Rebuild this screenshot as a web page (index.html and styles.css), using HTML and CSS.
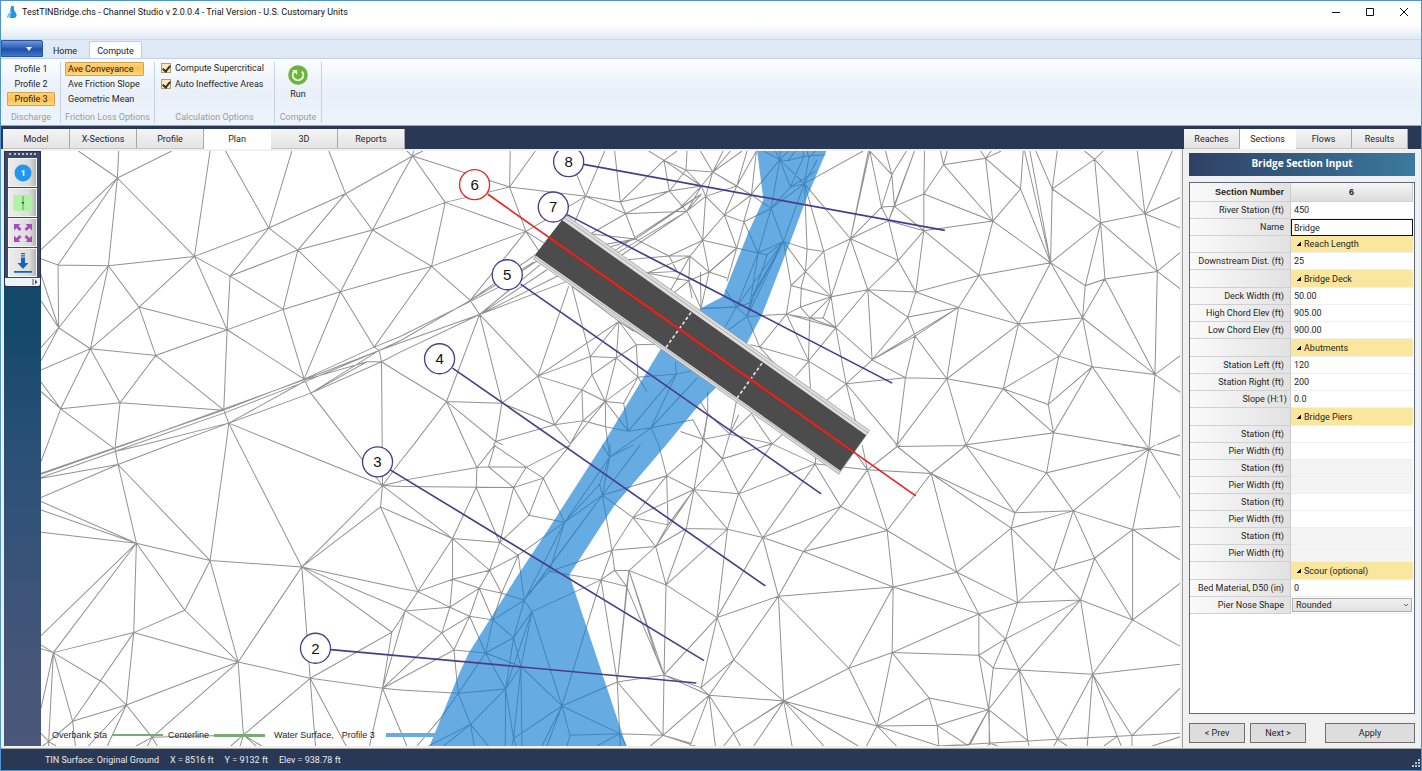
FILE: index.html
```html
<!DOCTYPE html>
<html lang="en">
<head>
<meta charset="utf-8">
<title>TestTINBridge.chs - Channel Studio</title>
<link rel="stylesheet" href="styles.css">
</head>
<body>
<div class="window">
  <header class="titlebar">
    <svg class="app-icon" viewBox="0 0 12 14"><path d="M5 1.500C7 0 8.500 1 8 3.500 7.500 6 10 7 10.500 9c.5 2-.5 3.500-2 4H2C.5 11.500 2 9.500 3.500 8 5 6.500 4 4 5 1.500Z" fill="#2196e8"/><path d="M5 6c1.500 2-2 3.500-.5 7H2C.5 11 4.500 9 5 6Z" fill="#9adcff"/></svg>
    <span class="title">TestTINBridge.chs - Channel Studio v 2.0.0.4 - Trial Version - U.S. Customary Units</span>
    <div class="caption-buttons">
      <button aria-label="Minimize"><svg viewBox="0 0 10 10"><path d="M1 5.500h8"/></svg></button>
      <button aria-label="Maximize"><svg viewBox="0 0 10 10"><path d="M1.500 1.500h7v7h-7z"/></svg></button>
      <button aria-label="Close"><svg viewBox="0 0 10 10"><path d="M1 1l8 8M9 1l-8 8"/></svg></button>
    </div>
  </header>
  <div class="quickbar"></div>
  <nav class="ribbon-tabs">
    <button class="app-menu" aria-label="Application menu"><svg viewBox="0 0 6 4"><path d="M0 0h6L3 4z" fill="#fff"/></svg></button>
    <button class="ribbon-tab">Home</button>
    <button class="ribbon-tab active">Compute</button>
  </nav>
  <section class="ribbon">
    <div class="group discharge">
      <div class="options"><button>Profile 1</button><button>Profile 2</button><button class="on">Profile 3</button></div>
      <div class="group-name">Discharge</div>
    </div>
    <div class="group friction">
      <div class="options"><button class="on">Ave Conveyance</button><button>Ave Friction Slope</button><button>Geometric Mean</button></div>
      <div class="group-name">Friction Loss Options</div>
    </div>
    <div class="group calc">
      <div class="checks">
        <label><input type="checkbox" checked>Compute Supercritical</label>
        <label><input type="checkbox" checked>Auto Ineffective Areas</label>
      </div>
      <div class="group-name">Calculation Options</div>
    </div>
    <div class="group run">
      <button class="run-button"><svg viewBox="0 0 20 20"><circle cx="10" cy="10" r="9.800" fill="#6cb33f"/><path d="M6.200 6.500A5.200 5.200 0 1 0 13.800 6.500" fill="none" stroke="#e6f5d8" stroke-width="2"/><path d="M4.200 5h5v5z" fill="#e6f5d8"/></svg>Run</button>
      <div class="group-name">Compute</div>
    </div>
  </section>
  <div class="view-tabs">
    <div class="tabs main-tabs"><button>Model</button><button>X-Sections</button><button>Profile</button><button class="active">Plan</button><button>3D</button><button>Reports</button></div>
    <div class="tabs side-tabs"><button>Reaches</button><button class="active">Sections</button><button>Flows</button><button>Results</button></div>
  </div>
  <main class="workspace">
    <aside class="toolstrip">
      <div class="toolbar">
        <div class="grip"></div>
        <button aria-label="Section labels"><svg viewBox="0 0 20 20"><circle cx="10" cy="10" r="8.500" fill="#2196f3"/><text x="10" y="13" class="tool-digit">1</text></svg></button>
        <button aria-label="Centerline"><svg viewBox="0 0 20 20"><path d="M.5 2h19v16H.5z" fill="#b2f2a8"/><path d="M10 3v14" stroke="#5c9c57"/><path d="M8.500 9h3L10 11.500z" fill="#1f6b20"/></svg></button>
        <button aria-label="Zoom extents"><svg viewBox="0 0 20 20"><g fill="#ab47bc"><path id="corner" d="M1 1h6.500L5.500 3 8.500 6 6.500 8 3.500 5 1 7.500z"/><use href="#corner" transform="matrix(-1 0 0 1 20 0)"/><use href="#corner" transform="matrix(1 0 0 -1 0 20)"/><use href="#corner" transform="rotate(180 10 10)"/></g></svg></button>
        <button aria-label="Download surface"><svg viewBox="0 0 20 20"><path d="M8 0h4v1.200H8zM8 2.300h4v1.200H8zM8 4.600h4V10h3.500L10 16 4.500 10H8zM1 18h18v1.700H1z" fill="#1565c0"/></svg></button>
        <div class="overflow"><svg viewBox="0 0 6 6"><path d="M1 0v6" stroke="#555"/><path d="M3 .5L5.500 3 3 5.500z" fill="#555"/></svg></div>
      </div>
    </aside>
    <div class="map">
      <svg class="plan" viewBox="123 19 3417 1784" preserveAspectRatio="xMinYMin slice">
        <g class="mesh">
          <path d="M235 19L352 100L356 19M352 100L515 19M352 100L123 315M352 100L174 361M352 100L325 363M352 100L583 335M123 342L174 361L325 363L583 335M174 361L176 549M325 363L176 549M325 363L417 487M325 363L271 612M176 549L123 390M176 549L123 468M176 549L123 608M176 549L123 648M176 549L271 612L123 676M271 612L417 487L583 335M271 612L467 632L417 487L681 555L467 632L360 774L271 612L182 792M467 632L671 796M182 792L123 712M182 792L123 740M182 792L360 774L671 796M182 792L142 900M182 792L328 900M360 774L346 900M583 335L630 19M583 335L806 250M583 335L690 394M583 335L681 555M676 19L806 250L875 19M806 250L1036 147M806 250L893 316M806 250L690 394L893 316M690 394L681 555M690 394L849 494L681 555L912 703M681 555L671 796M849 494L893 316M849 494L1021 441M849 494L912 703M893 316L1036 147M893 316L1117 256M893 316L1021 441M1036 147L986 19M1036 147L1200 55M1036 147L1117 256L1200 100M1117 256L1200 225M1117 256L1200 308M1117 256L1021 441L1200 390M1021 441L1122 607L1200 497M1021 441L912 703M370 900L671 796L912 703L1122 607L1200 575M375 900L912 705L1137 617L1200 588M400 900L671 805L912 712L1137 617L1200 594M430 900L686 835L912 710M510 900L686 835L932 745L1144 651L1200 622M671 796L686 835M912 703L932 745L1137 617M932 745L1100 651L1144 651L1137 617L1122 607M912 706L1100 651M1144 651L1146 900M1144 651L1200 686M932 745L1052 900M686 835L678 900M686 835L718 900M686 835L845 900"/>
          <path transform="translate(0 900)" d="M142 0L123 50M328 0L345 12L346 0M345 12L354 59M123 85L370 0M123 88L375 0M123 98L345 20L400 0M123 100L354 59M345 20L430 0M123 158L354 59L510 0M354 59L409 295M354 59L630 347M409 295L123 170M409 295L123 195M409 295L123 262M409 295L630 347M409 295L123 572M409 295L160 623M409 295L401 563M409 295L554 496L630 347L678 0M630 347L905 366M630 347L714 651M554 496L401 563M554 496L714 651M401 563L160 623M401 563L218 829M401 563L379 780M401 563L714 651M160 623L123 600M160 623L123 611M160 623L123 790M160 623L146 890M160 623L218 829M160 623L311 714L379 780L218 829L146 890M379 780L714 651M379 780L456 877M379 780L265 903M379 780L322 903M218 829L226 903M146 890L123 865M146 890L168 903M146 890L128 903M146 890V903M714 651L905 366M714 651L930 700M714 651L730 870M714 651L456 877L472 903M456 877L408 903M456 877L442 903M456 877L730 870L930 700M730 870L692 903M730 870L720 903M730 870L768 903M730 870L785 903M905 366L718 0M905 366L930 700M905 366L1147 122M905 366L1141 186M905 366L1200 430M905 366L1200 490M905 366L1175 562L930 700L1147 730L1175 562L1200 525M1147 730L1200 552M930 700L946 903M930 700L1038 903M1147 730L1108 903M1147 730L1220 903M1147 730L1200 735M1147 122L845 0M1147 122L1141 186M1147 122L1052 0M1147 122L1200 50M1147 122L1200 110M1147 122L1200 125M1147 122L1200 163M1147 122L1146 0M1141 186L1200 212M1141 186L1200 318"/>
          <path transform="translate(1200 0)" d="M0 55L37 34L0 100M37 34L20 19M37 34L40 19M37 34L68 19M37 34L328 127M37 34L135 173L0 225M135 173L94 365L0 308M135 173L328 127L377 260L135 173M94 365L0 390M94 365L0 497M94 365L377 260M94 365L210 467M328 127L330 19M328 127L405 19M328 127L556 155M377 260L210 467M377 260L430 340M377 260L556 155M377 260L470 320M210 467L420 320M556 155L613 19M556 155L500 19M556 155L660 172L643 19M556 155L490 310M660 172L676 207L556 155M660 172L807 139M676 207L570 268M676 207L859 200M676 207L705 283M676 207L807 139M660 172L791 47L745 19M791 47L830 19M791 47L857 76L860 19M791 47L807 139M791 47L903 124M857 76L937 82L900 19M857 76L807 139L903 124M857 76L903 124M937 82L968 19M937 82L1025 19M937 82L990 19M1040 19L1009 124L1053 151M937 82L903 124L916 155L937 82M937 82L1009 124L1068 19M1009 124L916 155L972 211L1053 151M937 82L1053 151L1068 19M903 124L832 197L705 283M903 124L859 200L807 139M903 148L832 197M903 148L859 200L916 155M903 148L705 283L610 300M903 148L640 320M859 200L650 325M859 200L665 330M859 200L907 287L972 211L1009 124M907 287L916 155M972 211L1030 231L1053 151M972 211L1009 310L907 287L806 334L705 283M907 287L926 382L1009 310M907 287L869 334L926 382L865 408L869 334L806 334L680 345M869 334L740 385M806 334L830 380L740 385M869 334L806 445M865 408L740 385M865 408L820 445M865 408L875 460M926 382L902 491M926 382L980 400M902 491L865 408M902 491L1008 487M705 283L620 310M705 283L575 268M620 298L705 283M0 575L290 430L415 345M0 588L210 467L400 352M0 594L238 509L440 375M0 622L238 509L480 390M238 509L420 360M238 509L500 410M210 467L238 509L139 770M238 509L305 775M238 509L413 694L656 530L515 425M139 770L0 686M139 770L305 775L286 890L139 770L40 900M139 770L198 900M305 775L413 694L463 840L305 775M413 694L505 425M413 694L570 635L515 425M413 694L545 735L463 840L510 897L548 828L463 840M463 840L286 890L280 900M286 890L308 900M570 635L656 530L648 639L570 635L575 690L648 639L615 770L575 690L545 735L615 770L548 828L545 735M656 530L708 600L648 639L713 697L708 600L790 598M656 530L700 560M656 530L745 585M713 697L615 770L684 859L828 688L713 697L740 740M615 770L616 846L548 828M615 770L670 775L713 697M615 770L510 897M684 859L616 846L628 937M684 859L670 775M684 859L752 849L828 688L825 650M752 849L890 700M752 849L775 900M752 849L628 937M752 849L878 825M828 688L910 670M922 806L922 740M922 806L900 770M922 806L908 883L878 825M908 883L840 860M908 883L905 900"/>
          <path transform="translate(2100 0)" d="M190 19L238 45L225 19M240 19L238 45L265 19M238 45L263 48L310 35L375 30M263 48L285 19M238 45L152 150M238 45L270 127L312 117L238 45L212 191L270 127L310 35L308 19M312 117L325 40L320 19M325 40L345 19M312 117L350 45M270 127L345 80M152 150L212 191L131 231M312 117L212 191L249 290L312 117L320 313L370 320L312 117L450 282M212 191L173 325L249 290L200 330L173 325L131 231L109 310L173 325M26 382L109 310L80 410M249 290L149 475L173 325L108 487M249 290L140 515L200 330M249 290L108 487M249 290L155 455M249 290L320 313M249 290L315 381L320 313M249 290L272 422L315 381L393 456L272 422L258 508L140 515L149 475L108 487L140 515L178 607L258 508L300 487L303 423M75 435L108 487L2 491M108 487L75 545M140 515L85 555M315 381L370 320M315 381L303 423M300 487L330 521L258 508L325 649L178 607L225 660M258 508L405 549M325 649L330 730M325 649L285 695M178 607L150 600M2 491L0 382M22 806L10 883L88 868L22 806M88 868L108 770M88 868L215 897L66 942L10 883M88 868L66 942L115 1047L215 897L155 810M115 810L88 868L160 800M215 897L245 870M215 897L345 957L345 935M115 1047L345 957L187 1179L115 1047"/>
          <path transform="translate(1200 900)" d="M0 50L40 0M198 0L230 68L284 0L265 66L378 67L280 0M230 68L0 108L0 112M230 68L265 66L340 128L228 128L230 68M0 125L340 128L378 67L429 100L340 128L386 211L429 100L510 0L378 67M429 100L493 232L386 211L298 293L340 128M228 128L157 281L0 212M228 128L298 293M157 281L0 163M157 281L298 293L354 331L493 232M157 281L157 403L268 376L157 281M268 376L354 331L298 293M268 376L298 293M268 376L304 445L237 430L268 376M157 403L149 487L53 440L157 403L237 430L149 487L15 498L53 440L0 430M53 440L0 318M53 440L157 281M149 487L208 514L237 430L278 525L208 514L125 564L149 487M15 498L125 564L161 615L208 514L256 624L161 615L-53 730M125 564L-53 730M15 498L0 525M15 498L0 552M15 498L0 490M304 445L354 331L372 466L278 525L304 445L372 466M278 525L340 578L256 624L278 525M372 466L340 578L362 665L256 624L174 745L161 615M372 466L395 500L340 578L395 500L362 665L316 732L256 624M395 500L485 783L362 665M372 466L493 232M380 450L447 380L493 232M372 466L606 151M386 450L606 151L493 232L628 37M493 232L598 118L606 151L628 37L605 0M598 118L628 37L630 0M606 151L616 100L628 37L700 0M606 151L720 0M606 151L799 93L775 0M606 151L698 218L799 93L905 0M606 151L635 316L698 218L881 134M447 380L635 316L766 305L698 218L803 240M447 380L602 405L635 316L643 376L602 405L395 500M602 405L485 783M602 405L651 711L679 425L602 405M643 376L686 377L679 425L643 376L602 405M686 377L766 305L803 240L799 93L881 134L803 240L766 305L881 134M766 305L797 420L686 377L791 690L679 425M686 377L651 711M690 390L770 640L791 690M797 420L858 251L881 134L905 0M858 251L766 305M858 251L981 253L881 134L1014 147M967 42L881 134M967 42L908 -17M1014 147L981 253L1087 278M797 420L981 253L950 518L797 420L791 690L950 518L1087 278L1134 454L950 518L1000 645L1134 454L1150 768L1000 645L902 728L950 518M651 711L791 690L926 751L902 728L791 690L788 871L926 751L1150 768L1000 865L1150 770L1060 903M651 711L485 783M651 711L658 866L660 903M651 711L788 871L658 866L509 871L485 783L658 866L678 903M658 866L590 903M509 871L500 903M485 783L425 903M485 783L440 903M485 783L340 880M788 871L750 903M788 871L885 903M788 871L872 895L870 903M872 895L926 751L945 903M926 751L1000 865L970 903M1000 865L1020 903M926 751L1000 645M1150 768L1175 903M0 735L174 745L316 732L211 838L174 745L125 815L50 903M211 838L85 903M211 838L130 903M211 838L222 903M211 838L265 903M316 732L315 903M316 732L340 880L362 665L365 903M340 880L335 903M340 880L348 903M316 732L340 578M316 732L395 500"/>
          <path transform="translate(2370 0)" d="M42 117L218 19M180 282L238 19L304 90L285 19M304 90L348 19M304 90L273 187L238 19M304 90L312 185L372 19M312 185L273 187L294 228L312 185L400 148M312 185L400 258M372 19L294 228L180 282M180 282L273 187M234 19L180 282L323 347L294 228L400 258M402 19L400 148L400 258L323 347M400 148L459 60L450 19M459 60L470 19M459 60L585 41L570 19M585 41L602 19M585 41L632 19M585 41L607 229L459 60M585 41L690 133L607 229L400 148M607 229L400 258L376 442L323 347M400 258L565 392L607 229L780 354L690 133L698 19M565 392L376 442L504 488L565 392L780 354L702 19M718 19L780 354M736 19L785 133L780 354M800 19L785 133L912 44L882 19M912 44L938 19M912 44L930 234L785 133M912 44L1063 207L930 234L780 354L884 423L930 234L943 403L884 423L876 519L780 354L684 538L565 392M1040 19L1063 207L1145 19M1063 207L1170 158M1063 207L1170 250M1063 207L1100 380L1170 322M1100 380L1170 433M1100 380L943 403L876 519L684 538L504 488L352 517L376 442L232 435L352 517L245 645L504 488L374 574L352 517M930 234L1100 380L1093 689L943 403M232 435L180 282L100 320M232 435L323 347M232 435L122 456L180 282M232 435L136 549L245 645L232 435M100 320L122 456M30 487L122 456M58 520L98 520L122 456L58 520L136 549L98 520M122 456L136 549L54 649L58 520M136 549L167 717L245 645L345 699L374 574L469 702L504 488M374 574L245 645M54 649L167 717L110 765M167 717L195 830M167 717L345 699L469 702L320 900L167 717M684 538L469 702L638 732L684 538L805 634L876 519L905 666L805 634L773 779L905 666L1093 689L876 519M805 634L638 732L773 779L789 864L905 666L1067 900M638 732L789 864L526 900L638 732M469 702L526 900M789 864L1075 912L1093 689L1170 632M1093 689L1170 743M1170 870L1100 900M345 699L320 900M789 864L783 900"/>
          <path transform="translate(2370 900)" d="M315 0L320 5L330 0M320 5L526 2L520 0M320 5L422 86L526 2L673 204L422 86L662 250L673 204L768 84L526 2M783 0L768 84L1075 12L995 0M1075 12L1067 0M1075 12L1095 0M1075 12L1170 32M1075 12L1170 162M1075 12L1026 254L848 198L1075 12M320 5L231 75L422 86L290 257L231 75L215 0M231 75L185 10M73 57L151 185L231 75M73 57L231 75M151 185L-83 278M151 185L290 257L39 320L151 185M39 320L-83 278M39 320L-36 454M39 320L308 426L290 257L499 382L422 86M308 426L-36 454M308 426L499 382L662 250L848 198L673 204M768 84L848 198L789 376L662 250L681 473L499 382L565 507L308 426L175 670L-36 454M308 426L305 623L565 507L681 473L789 376L912 340L848 198M1026 254L1170 245M1026 254L1170 346M1026 254L1026 525L912 340L1026 254M912 340L870 465L789 376M681 473L870 465L1026 525L1170 414M1026 525L1170 605M1026 525L906 688L870 465L645 582L681 473M870 465L686 675L645 582L565 507L565 631L645 582L608 669L565 631L305 623L175 670L-20 768M175 670L260 843L305 623L416 759L594 794L565 631M608 669L594 794L686 675L608 669M686 675L906 688L1170 658M686 675L712 887L594 794L440 841L416 759L260 843L440 841L445 903L530 900L440 841M686 675L801 883L906 688L890 903M906 688L980 874L906 688L1024 872L1170 728M1024 872V903M980 874L1170 865M260 843L-20 768M260 843L228 903M260 843L318 903M260 843L445 903M-20 768L100 903M-20 768L203 903M445 903L801 883L980 874M594 794L532 903M594 794L538 900M594 794L598 900M596 794V900M712 887L715 903M801 883L790 903M801 883L830 903M980 874L940 903M980 874L992 903M1170 875L1085 903M598 895L592 903M598 895L622 903"/>
        </g>
        <path class="water" d="M2270 19L2289 165 2245 260 2185 410 2168 455 2100 491 1983 610 1807 900 1630 1175 1550 1295 1405 1525 1375 1590 1288 1803H1878L1707 1290 1840 1085 1998 900 2100 775 2145 730 2240 595 2285 510 2370 290 2415 170 2478 19Z"/>
        <path class="rail" d="M1697 212L2607 857 2515 988 1600 343Z"/>
        <path class="rail-line" d="M1692 219L2602 864M1604 337L2519 982"/>
        <path class="deck" d="M1685 226L2597 871 2520 978 1604 331Z"/>
        <path class="joint" d="M2072 503L1997 608M2285 655L2210 760"/>
        <path class="axis-wide" d="M1646 278L2562 923"/>
        <path class="axis" d="M1462 148L2746 1053"/>
        <path class="cut" d="M1750 59L2833 257M1699 209L2675 715M1561 418L2462 1047M1357 670L2295 1323M1170 975L2111 1547M992 1514L2088 1614"/>
        <g class="tag"><circle cx="1705" cy="51" r="45"/><circle cx="1659" cy="187" r="45"/><circle cx="1521" cy="390" r="45"/><circle cx="1318" cy="642" r="45"/><circle cx="1132" cy="951" r="45"/><circle cx="946" cy="1510" r="45"/><circle class="selected" cx="1423" cy="120" r="45"/>
          <text x="1705" y="67">8</text><text x="1659" y="203">7</text><text x="1521" y="406">5</text><text x="1318" y="658">4</text><text x="1132" y="967">3</text><text x="946" y="1526">2</text><text x="1423" y="136">6</text></g>
      </svg>
      <div class="legend"><span>Overbank Sta</span><i></i><span>Centerline</span><i class="center"></i><span class="key-water">Water Surface,</span><span class="key-profile">Profile 3</span><i class="surface"></i></div>
    </div>
    <section class="inspector">
      <h2>Bridge Section Input</h2>
      <div class="sheet">
        <table>
          <thead><tr><th>Section Number</th><th class="number">6</th></tr></thead>
          <tbody>
            <tr><th><label for="rs">River Station (ft)</label></th><td><input id="rs" value="450"></td></tr>
            <tr class="current"><th><label for="nm">Name</label></th><td><input id="nm" value="Bridge"></td></tr>
            <tr class="section"><th></th><td><i class="fold"></i>Reach Length</td></tr>
            <tr><th><label for="dd">Downstream Dist. (ft)</label></th><td><input id="dd" value="25"></td></tr>
            <tr class="section"><th></th><td><i class="fold"></i>Bridge Deck</td></tr>
            <tr><th><label for="dw">Deck Width (ft)</label></th><td><input id="dw" value="50.00"></td></tr>
            <tr><th><label for="hc">High Chord Elev (ft)</label></th><td><input id="hc" value="905.00"></td></tr>
            <tr><th><label for="lc">Low Chord Elev (ft)</label></th><td><input id="lc" value="900.00"></td></tr>
            <tr class="section"><th></th><td><i class="fold"></i>Abutments</td></tr>
            <tr><th><label for="sl">Station Left (ft)</label></th><td><input id="sl" value="120"></td></tr>
            <tr><th><label for="sr">Station Right (ft)</label></th><td><input id="sr" value="200"></td></tr>
            <tr><th class="ratio"><label for="sp">Slope (H:1)</label></th><td><input id="sp" value="0.0"></td></tr>
            <tr class="section"><th></th><td><i class="fold"></i>Bridge Piers</td></tr>
            <tr><th><label for="s1">Station (ft)</label></th><td><input id="s1"></td></tr>
            <tr><th><label for="w1">Pier Width (ft)</label></th><td><input id="w1"></td></tr>
            <tr class="alt"><th><label for="s2">Station (ft)</label></th><td><input id="s2"></td></tr>
            <tr class="alt"><th><label for="w2">Pier Width (ft)</label></th><td><input id="w2"></td></tr>
            <tr><th><label for="s3">Station (ft)</label></th><td><input id="s3"></td></tr>
            <tr><th><label for="w3">Pier Width (ft)</label></th><td><input id="w3"></td></tr>
            <tr class="alt"><th><label for="s4">Station (ft)</label></th><td><input id="s4"></td></tr>
            <tr class="alt"><th><label for="w4">Pier Width (ft)</label></th><td><input id="w4"></td></tr>
            <tr class="section"><th></th><td><i class="fold"></i>Scour (optional)</td></tr>
            <tr><th><label for="bm">Bed Material, D50 (in)</label></th><td><input id="bm" value="0"></td></tr>
            <tr class="choice"><th><label for="pn">Pier Nose Shape</label></th><td><div class="combo"><select id="pn"><option>Rounded</option><option>Square</option></select><svg viewBox="0 0 6 4"><path d="M1 1l2 2 2-2" fill="none" stroke="#666"/></svg></div></td></tr>
          </tbody>
        </table>
      </div>
      <div class="actions"><button>&lt; Prev</button><button>Next &gt;</button><button class="apply">Apply</button></div>
    </section>
  </main>
  <footer class="status">
    <span>TIN Surface: Original Ground</span><span>X = 8516 ft</span><span>Y = 9132 ft</span><span>Elev = 938.78 ft</span>
    <svg class="resize" viewBox="0 0 9 9"><path d="M7 0h2v2H7zM4 3h2v2H4zM7 3h2v2H7zM1 6h2v2H1zM4 6h2v2H4zM7 6h2v2H7z" fill="#b8c0cf"/></svg>
  </footer>
</div>
</body>
</html>
```
FILE: styles.css
```css
* { box-sizing: border-box; }
body { margin: 0; font: 9px/12px Roboto, "Open Sans", sans-serif; color: #1e1e1e; }
button, input, select { font: inherit; color: inherit; margin: 0; padding: 0; border: 0; background: none; border-radius: 0; }
button { white-space: nowrap; }
svg { display: block; }

.window { height: 100vh; display: flex; flex-direction: column; border: 1px solid #4e94cf; background: #fff; }
.titlebar { height: 23px; flex: none; display: flex; align-items: center; padding: 0 7px 2px 5px; }
.app-icon { width: 12px; height: 14px; margin-right: 4px; }
.title { flex: 1; color: #111; }
.caption-buttons { display: flex; gap: 14px; }
.caption-buttons button { width: 20px; height: 20px; display: grid; place-items: center; }
.caption-buttons svg { width: 10px; height: 10px; fill: none; stroke: #111; }
.quickbar { height: 16px; flex: none; background: linear-gradient(#fff, #e0eaf5); border-bottom: 1px solid #cdd9e6; }

.ribbon-tabs { height: 18px; flex: none; display: flex; align-items: flex-end; background: #dfe9f5; }
.app-menu { width: 42px; height: 17px; align-self: flex-start; display: flex; align-items: center; justify-content: flex-end; padding-right: 10px; background: linear-gradient(#6f97dc, #2e62b8 45%, #1d4fa5 55%, #3f78ce); border: 1px solid #2c549a; border-radius: 0 2px 0 0; }
.app-menu svg { width: 6px; height: 4px; }
.ribbon-tab { width: 44px; height: 17px; padding-top: 2px; border: 1px solid transparent; border-bottom: 0; }
.ribbon-tab.active { width: 53px; margin-left: 2px; background: #fbfdff; border-color: #bccfe5; border-radius: 2px 2px 0 0; }

.ribbon { height: 68px; flex: none; display: flex; padding: 3px 0 2px; background: linear-gradient(#fcfdff, #e9f0fa 50%, #eef4fb); border-top: 1px solid #c3d3e6; border-bottom: 1px solid #8ea9c9; }
.group { display: flex; flex-direction: column; justify-content: space-between; border-right: 1px solid #c5d3e4; }
.group-name { text-align: center; color: #9b9b9b; white-space: nowrap; }
.discharge { width: 60px; padding-left: 1px; }
.friction { width: 94px; }
.calc { width: 120px; }
.run { width: 47px; }
.options { display: flex; flex-direction: column; gap: 1px; padding: 0 4px; }
.options button { height: 14px; line-height: 12px; border: 1px solid transparent; border-radius: 1px; }
.friction .options button { width: 79px; padding-left: 2px; text-align: left; }
.discharge .options { padding: 0 5px; }
.options .on { background: linear-gradient(#ffd27c, #ffc05a 50%, #ffd87a); border-color: #d6a24b; }
.checks { display: flex; flex-direction: column; gap: 4px; padding-left: 6px; }
.checks label { display: flex; align-items: center; gap: 4px; white-space: nowrap; }
.checks input { appearance: none; width: 10px; height: 10px; border: 1px solid #b59a62; background: #ffe7b3; display: grid; place-items: center; }
.checks input::after { content: ""; width: 3px; height: 6px; border: solid #26334d; border-width: 0 2px 2px 0; transform: rotate(40deg); }
.run-button { display: flex; flex-direction: column; align-items: center; gap: 3px; padding-top: 3px; }
.run-button svg { width: 20px; height: 20px; }

.view-tabs { height: 23px; flex: none; display: flex; justify-content: space-between; align-items: flex-end; padding: 0 13px 0 2px; background: #293955; }
.tabs { display: flex; }
.tabs button { width: 67px; height: 20px; background: linear-gradient(#f4f4f4, #e4e4e4); border-right: 1px solid #a8a8a8; border-bottom: 1px solid #c4c4c4; }
.side-tabs button { width: 56px; }
.tabs .active { background: #fff; border-color: #fff; }

.workspace { flex: 1; min-height: 0; display: flex; background: #f0f0f0; border-bottom: 1px solid #a6a6a6; }
.toolstrip { width: 37px; margin: 2px 0 2px 3px; background: linear-gradient(#0f4766, #14486a 30%, #2a5076 50%, #475679 90%, #4a567b); }
.toolbar { background: #3b4a6b; border: 1px solid #24304d; padding: 0 3px; border-radius: 1px; }
.grip { height: 5px; margin: 1px 1px 0; border-top: 2px dotted #b9c3d8; }
.toolbar button { display: grid; place-items: center; width: 29px; height: 29px; margin-bottom: 1px; background: linear-gradient(90deg, #ececec, #dcdcdc 75%, #b4b4b4); border: 1px solid #f5f5f5; }
.toolbar button svg { width: 20px; height: 20px; }
.tool-digit { font: bold 8px "Open Sans", sans-serif; fill: #fff; text-anchor: middle; }
.overflow { height: 8px; margin: 0 -3px; display: flex; align-items: center; justify-content: flex-end; padding-right: 2px; background: #eef3fa; border-radius: 0 0 2px 2px; }
.overflow svg { width: 6px; height: 6px; }

.map { position: relative; flex: 1; min-width: 0; margin: 2px 0; background: #fff; }
.plan { width: 100%; height: 100%; overflow: hidden; }
.mesh { fill: none; stroke: #929292; stroke-width: 3; }
.water { fill: #147fd4; fill-opacity: .65; }
.rail { fill: #dedede; stroke: #8c8c8c; stroke-width: 2; }
.rail-line { fill: none; stroke: #999; stroke-width: 2; }
.deck { fill: #4c4c4c; }
.joint { fill: none; stroke: #e4e4e4; stroke-width: 5; stroke-dasharray: 10 7; }
.axis-wide { fill: none; stroke: #b3261c; stroke-width: 8; }
.axis { fill: none; stroke: #e8261f; stroke-width: 5; }
.cut { fill: none; stroke: #483d8b; stroke-width: 5; }
.tag circle { fill: #fff; stroke: #483d8b; stroke-width: 4; }
.tag circle.selected { stroke: #e8261f; }
.tag text { font: 45px "Liberation Sans", Arial, sans-serif; fill: #111; text-anchor: middle; }
.legend { position: absolute; left: 11px; bottom: 5px; display: flex; align-items: center; gap: 5px; font: 9px/12px "Liberation Sans", Arial, sans-serif; white-space: nowrap; }
.legend i { width: 51px; height: 2px; background: #7aab76; }
.legend .center { height: 3px; }
.legend .surface { height: 4px; background: #66ace3; margin-left: 6px; }
.key-water { margin-left: 4px; }
.key-profile { margin-left: 3px; }

.inspector { width: 239px; flex: none; display: flex; flex-direction: column; margin-left: 2px; padding: 4px 6px 5px 6px; border-left: 1px solid #a0a0a0; }
.inspector h2 { margin: 0 0 6px; height: 23px; font: bold 10px/21px "Open Sans", sans-serif; text-align: center; color: #fff; background: linear-gradient(90deg, #2f4065, #3a7a9e); }
.sheet { flex: 1; min-height: 0; border: 1px solid #5c6b80; background: #fff; padding-right: 1px; }
table { width: 100%; border-collapse: separate; border-spacing: 0; table-layout: fixed; }
th, td { padding: 0; height: 17px; line-height: 12px; white-space: nowrap; }
th { width: 101px; padding-right: 6px; font-weight: 400; text-align: right; background: linear-gradient(90deg, #fafafa, #e2e2e2); border-right: 1px solid #ccc; border-bottom: 1px solid #d0d0d0; }
thead th { height: 19px; font: bold 9px/12px "Liberation Sans", Arial, sans-serif; }
thead .number { width: auto; padding: 0; text-align: center; background: linear-gradient(#f5f5f5, #ddd); }
.ratio { padding-right: 3px; }
td { border-bottom: 1px solid #f0f0f0; }
td input { display: block; width: 100%; height: 16px; padding: 0 3px; outline: 0; }
.current td { border: 1px solid #111; }
.current td input { height: 15px; padding: 0 2px; }
.section ~ .section th, .section ~ .section td { height: 18px; }
.section td { padding-left: 6px; background: #fae69c; }
.alt td { background: #f4f4f4; }
.fold { display: inline-block; width: 4px; height: 4px; margin: 0 3px 1px 0; background: linear-gradient(135deg, transparent 50%, #111 50%); }
.combo { position: relative; margin: 1px; height: 14px; }
.combo select { appearance: none; width: 100%; height: 14px; padding: 0 3px; line-height: 12px; background: linear-gradient(#f0f0f0, #e2e2e2); border: 1px solid #acacac; }
.combo svg { position: absolute; right: 3px; top: 5px; width: 6px; height: 4px; }
.actions { display: flex; gap: 5px; margin-top: 9px; }
.actions button { width: 56px; height: 20px; background: #ddd; border: 1px solid #707070; }
.actions .apply { width: 90px; margin-left: auto; }

.status { height: 21px; flex: none; display: flex; align-items: center; gap: 11px; padding: 0 1px 0 44px; color: #e8ebf2; background: #293955; }
.resize { width: 9px; height: 9px; margin: 8px 0 0 auto; }
```
